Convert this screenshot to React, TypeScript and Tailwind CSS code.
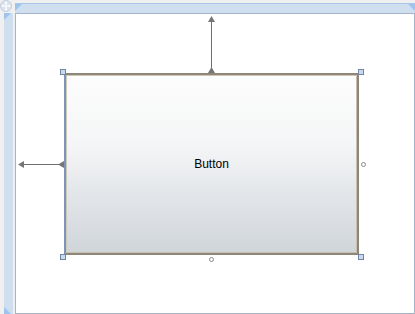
import React from "react";

function MoveGlyph() {
  return (
    <svg width="12" height="12" viewBox="0 0 12 12" className="absolute left-0 top-0">
      <circle cx="6" cy="6" r="5.5" fill="#d9e2ee" stroke="#c3cfde" />
      <path d="M6 1.5v9M1.5 6h9" stroke="#ffffff" strokeWidth="1.2" />
      <path d="M6 1.5l-1.5 1.8h3zM6 10.5l-1.5-1.8h3zM1.5 6l1.8-1.5v3zM10.5 6l-1.8-1.5v3z" fill="#ffffff" />
    </svg>
  );
}

function Corner({ d, className }: { d: string; className: string }) {
  return (
    <svg width="7" height="7" viewBox="0 0 7 7" className={className}>
      <path d={d} fill="#9ec3ec" />
    </svg>
  );
}

function Handle({ className }: { className: string }) {
  return <div className={`absolute h-[6px] w-[6px] border border-[#6e86aa] bg-[#cbd9ea] ${className}`} />;
}

function Dot({ className }: { className: string }) {
  return <div className={`absolute h-[5px] w-[5px] rounded-full border border-[#8a8a8a] bg-white ${className}`} />;
}

export default function App() {
  return (
    <div className="relative flex h-[314px] w-[415px] flex-col overflow-hidden bg-[#f0f0f0]" style={{ fontFamily: '"Liberation Sans", Arial, sans-serif' }}>
      <MoveGlyph />
      <div className="flex h-[13px]">
        <div className="w-[15px] shrink-0" />
        <div className="relative mt-[3px] h-[10px] flex-1 border-t border-[#a9c7e8] bg-[#cfdff0]">
          <Corner d="M0 0h7L0 7z" className="absolute left-0 top-0" />
          <Corner d="M0 0h7v7z" className="absolute right-0 top-0" />
        </div>
      </div>
      <div className="flex flex-1">
        <div className="ml-[4px] relative w-[9px] shrink-0 bg-[#cfdff0]">
          <Corner d="M0 0h7L0 7z" className="absolute left-0 top-0" />
          <Corner d="M0 0v7h7z" className="absolute bottom-0 left-0" />
        </div>
        <div className="w-[2px] shrink-0" />
        <div className="relative mb-[0px] flex-1 border border-[#a6b4c7] bg-white">
          {/* top margin adorner */}
          <svg width="9" height="58" viewBox="0 0 9 58" className="absolute left-[191px] top-[1px]">
            <path d="M4.5 3v52" stroke="#6f6f6f" strokeWidth="1" />
            <path d="M4.5 1L1 7h7z" fill="#767676" />
            <path d="M4.5 52L1 58h7z" fill="#767676" />
          </svg>
          {/* left margin adorner */}
          <svg width="47" height="9" viewBox="0 0 47 9" className="absolute left-[1px] top-[146px]">
            <path d="M3 4.5h41" stroke="#6f6f6f" strokeWidth="1" />
            <path d="M1 4.5L7 1v7z" fill="#767676" />
            <path d="M41 4.5L47 1v7z" fill="#767676" />
          </svg>

          <button className="absolute left-[48px] top-[59px] flex h-[182px] w-[295px] items-center justify-center border-2 border-[#8e8676] border-l-[#7d95b8] bg-[linear-gradient(to_bottom,#fdfdfd_0%,#f4f5f6_40%,#e4e7ea_65%,#d0d5da_100%)] text-[12px] text-black shadow-[inset_1px_1px_0_#cfc8ba,inset_-1px_-1px_0_#c7c0b2]">
            Button
          </button>

          <Handle className="left-[44px] top-[55px]" />
          <Handle className="left-[342px] top-[55px]" />
          <Handle className="left-[44px] top-[240px]" />
          <Handle className="left-[342px] top-[240px]" />
          <Dot className="left-[345px] top-[148px]" />
          <Dot className="left-[193px] top-[243px]" />
        </div>
      </div>
    </div>
  );
}
